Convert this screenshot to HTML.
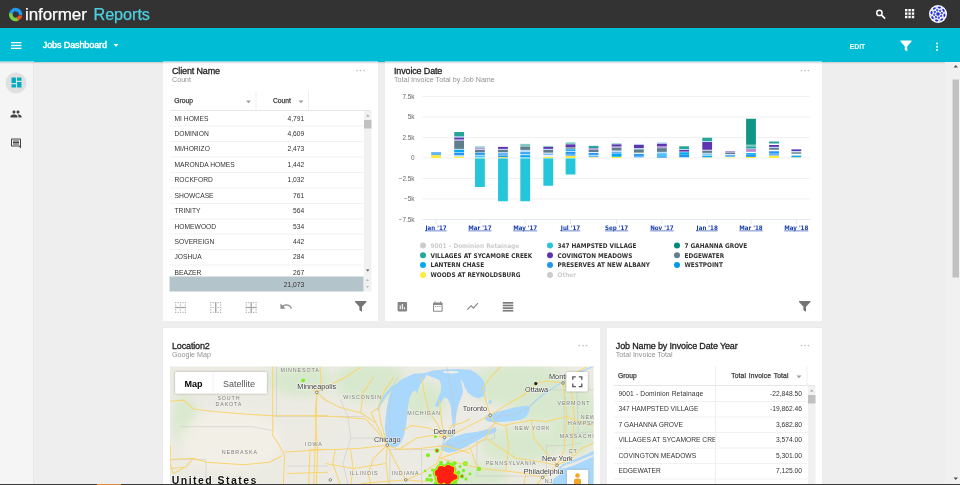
<!DOCTYPE html>
<html><head><meta charset="utf-8"><title>Informer Reports - Jobs Dashboard</title>
<style>
html,body{margin:0;padding:0;width:960px;height:485px;overflow:hidden;background:#eee}
body{font-family:"Liberation Sans",sans-serif;color:#212121}
#s{position:absolute;left:0;top:0;width:1920px;height:970px;transform:scale(.5);transform-origin:0 0;background:#eeeeee;overflow:hidden}
.abs{position:absolute}
#top{position:absolute;left:0;top:0;width:1920px;height:56px;background:#333333}
#bar{position:absolute;left:0;top:56px;width:1920px;height:67.5px;background:#00bcd4;}
#side{position:absolute;left:0;top:123px;width:67.7px;height:847px;background:#f5f5f5;border-right:1.2px solid #dadada;box-sizing:border-box}
.card{position:absolute;background:#fff;box-shadow:0 0 1.5px rgba(0,0,0,.08)}
.t{position:absolute;white-space:nowrap;line-height:1}
.ttl{font-size:18px;letter-spacing:-.3px;color:#212121;-webkit-text-stroke:.55px #212121}
.sub{font-size:14.3px;color:#929292}
.hd{font-size:13.4px;color:#3a3a3a;-webkit-text-stroke:.5px #3a3a3a}
.cell{font-size:13.4px;color:#333}
.hl{position:absolute;height:2px;background:#f1f1f1}
.vl{position:absolute;width:2px;background:#efefef}
svg{position:absolute;overflow:visible}
</style></head><body><div id="s">
<div id="top"></div><div id="bar"></div><div id="side"></div>
<svg style="left:0;top:0" width="60" height="56" viewBox="0 0 60 56">
<path d="M22.0 26.8 A9.6 9.6 0 0 1 40.9 30.1" fill="none" stroke="#1e9bf0" stroke-width="7"/>
<path d="M22.1 26.5 A9.6 9.6 0 0 0 35.8 37.8" fill="none" stroke="#73d14c" stroke-width="7"/>
<path d="M35.4 41.5 L34.2 35 L37.2 31.2 L44.3 30.8 Q43.5 38 35.4 41.5Z" fill="#f4511e"/>
</svg>
<div class="t " style="left:50.0px;top:10.6px;font-size:34px;color:#fff;-webkit-text-stroke:.5px #fff;letter-spacing:-.15px">informer</div>
<div class="t " style="left:187.0px;top:11.9px;font-size:32.5px;color:#4dd0e1;-webkit-text-stroke:.5px #4dd0e1;letter-spacing:-.15px">Reports</div>
<svg style="left:1750.5px;top:17.5px" width="22" height="22" viewBox="0 0 24 24"><circle cx="8.5" cy="8.5" r="5.800" fill="none" stroke="#fff" stroke-width="3.200"/><path d="M12.800 12.800 L21 21" stroke="#fff" stroke-width="3.600" stroke-linecap="butt"/></svg>
<svg style="left:1809.5px;top:18px" width="19" height="19" viewBox="0 0 19 19"><rect x="0.0" y="0.0" width="4.8" height="4.8" fill="#fff"/><rect x="0.0" y="6.8" width="4.8" height="4.8" fill="#fff"/><rect x="0.0" y="13.6" width="4.8" height="4.8" fill="#fff"/><rect x="6.8" y="0.0" width="4.8" height="4.8" fill="#fff"/><rect x="6.8" y="6.8" width="4.8" height="4.8" fill="#fff"/><rect x="6.8" y="13.6" width="4.8" height="4.8" fill="#fff"/><rect x="13.6" y="0.0" width="4.8" height="4.8" fill="#fff"/><rect x="13.6" y="6.8" width="4.8" height="4.8" fill="#fff"/><rect x="13.6" y="13.6" width="4.8" height="4.8" fill="#fff"/></svg>
<svg style="left:1858px;top:10px" width="36" height="36" viewBox="0 0 36 36"><circle cx="18" cy="18" r="18" fill="#fff"/><ellipse cx="30.9" cy="20.6" rx="2.1" ry="3.4" transform="rotate(11 30.9 20.6)" fill="#2430d6"/><ellipse cx="25.3" cy="29.0" rx="2.1" ry="3.4" transform="rotate(56 25.3 29.0)" fill="#2430d6"/><ellipse cx="15.4" cy="30.9" rx="2.1" ry="3.4" transform="rotate(101 15.4 30.9)" fill="#2430d6"/><ellipse cx="7.0" cy="25.3" rx="2.1" ry="3.4" transform="rotate(146 7.0 25.3)" fill="#2430d6"/><ellipse cx="5.1" cy="15.4" rx="2.1" ry="3.4" transform="rotate(191 5.1 15.4)" fill="#2430d6"/><ellipse cx="10.7" cy="7.0" rx="2.1" ry="3.4" transform="rotate(236 10.7 7.0)" fill="#2430d6"/><ellipse cx="20.6" cy="5.1" rx="2.1" ry="3.4" transform="rotate(281 20.6 5.1)" fill="#2430d6"/><ellipse cx="29.0" cy="10.7" rx="2.1" ry="3.4" transform="rotate(326 29.0 10.7)" fill="#2430d6"/><circle cx="24.3" cy="22.2" r="2.3" fill="#2430d6"/><path d="M18 18 L31.3 26.9" stroke="#9aa6f0" stroke-width="1"/><circle cx="19.5" cy="25.5" r="2.3" fill="#2430d6"/><path d="M18 18 L21.1 33.7" stroke="#9aa6f0" stroke-width="1"/><circle cx="13.8" cy="24.3" r="2.3" fill="#2430d6"/><path d="M18 18 L9.1 31.3" stroke="#9aa6f0" stroke-width="1"/><circle cx="10.5" cy="19.5" r="2.3" fill="#2430d6"/><path d="M18 18 L2.3 21.1" stroke="#9aa6f0" stroke-width="1"/><circle cx="11.7" cy="13.8" r="2.3" fill="#2430d6"/><path d="M18 18 L4.7 9.1" stroke="#9aa6f0" stroke-width="1"/><circle cx="16.5" cy="10.5" r="2.3" fill="#2430d6"/><path d="M18 18 L14.9 2.3" stroke="#9aa6f0" stroke-width="1"/><circle cx="22.2" cy="11.7" r="2.3" fill="#2430d6"/><path d="M18 18 L26.9 4.7" stroke="#9aa6f0" stroke-width="1"/><circle cx="25.5" cy="16.5" r="2.3" fill="#2430d6"/><path d="M18 18 L33.7 14.9" stroke="#9aa6f0" stroke-width="1"/><circle cx="18" cy="18" r="3.6" fill="#2a35d8"/></svg>
<svg style="left:21.5px;top:83.5px" width="21" height="14" viewBox="0 0 21 14"><rect y="0" width="21" height="2.6" fill="#fff"/><rect y="5.7" width="21" height="2.6" fill="#fff"/><rect y="11.4" width="21" height="2.6" fill="#fff"/></svg>
<div class="t " style="left:85.5px;top:81.2px;font-size:18.2px;color:#fff;-webkit-text-stroke:.8px #fff;letter-spacing:-.3px">Jobs Dashboard</div>
<svg style="left:226.5px;top:88px" width="10" height="6" viewBox="0 0 10 6"><path d="M0 0 L10 0 L5 5.5 Z" fill="#fff"/></svg>
<div class="t " style="left:1699.5px;top:85.6px;font-size:13.5px;color:#fff;font-weight:bold">EDIT</div>
<svg style="left:1801px;top:80.5px" width="22" height="22" viewBox="0 0 22 22"><path d="M0 0 H22 V2 L13.5 11.5 V22 L8.5 18.5 V11.5 L0 2 Z" fill="#fff"/></svg>
<svg style="left:1871px;top:85px" width="6" height="17" viewBox="0 0 6 17"><circle cx="3" cy="2" r="2" fill="#fff"/><circle cx="3" cy="8.5" r="2" fill="#fff"/><circle cx="3" cy="15" r="2" fill="#fff"/></svg>
<div class="abs" style="left:11px;top:144.5px;width:42px;height:42px;border-radius:50%;background:#e0e0e0"></div>
<svg style="left:22.5px;top:155px" width="20" height="20" viewBox="0 0 18 18"><path d="M0 10h8V0H0v10zm0 8h8v-6H0v6zm10 0h8V8h-8v10zm0-18v6h8V0h-8z" fill="#00acc1"/></svg>
<svg style="left:20px;top:216px" width="24" height="24" viewBox="0 0 24 24"><path d="M16 11c1.66 0 2.99-1.34 2.99-3S17.66 5 16 5c-1.66 0-3 1.34-3 3s1.34 3 3 3zm-8 0c1.66 0 2.99-1.34 2.99-3S9.660 5 8 5C6.340 5 5 6.340 5 8s1.340 3 3 3zm0 2c-2.330 0-7 1.170-7 3.500V19h14v-2.500c0-2.330-4.670-3.500-7-3.500zm8 0c-.29 0-.62.020-.970.050 1.160.84 1.970 1.970 1.970 3.450V19h6v-2.500c0-2.330-4.670-3.500-7-3.500z" fill="#424242"/></svg>
<svg style="left:20px;top:275px" width="24" height="24" viewBox="0 0 24 24"><path d="M21.990 4c0-1.100-.890-2-1.990-2H4c-1.100 0-2 .9-2 2v12c0 1.100.9 2 2 2h14l4 4-.010-18zM20 4v13.170L18.830 16H4V4h16zM6 12h12v2H6zm0-3h12v2H6zm0-3h12v2H6z" fill="#424242"/></svg>
<div class="card" id="c1" style="left:326px;top:123px;width:430px;height:518.5px"></div>
<div class="card" id="c2" style="left:770px;top:123px;width:874px;height:518.5px"></div>
<div class="card" id="c3" style="left:326px;top:656px;width:874px;height:330px"></div>
<div class="card" id="c4" style="left:1214px;top:656px;width:430px;height:330px"></div>
<div class="t ttl" style="left:344.0px;top:131.8px;">Client Name</div>
<div class="t sub" style="left:344.0px;top:151.4px;">Count</div>
<svg style="left:712px;top:138.5px" width="18" height="4" viewBox="0 0 18 4"><circle cx="2" cy="2" r="1.7" fill="#bdbdbd"/><circle cx="9" cy="2" r="1.7" fill="#bdbdbd"/><circle cx="16" cy="2" r="1.7" fill="#bdbdbd"/></svg>
<div class="t hd" style="left:348.5px;top:194.2px;">Group</div>
<svg style="left:491.5px;top:200.5px" width="10" height="6" viewBox="0 0 10 6"><path d="M0 0 H10 L5 5.5 Z" fill="#9e9e9e"/></svg>
<div class="t hd" style="right:1338.5px;top:194.2px;">Count</div>
<svg style="left:596.5px;top:200.5px" width="10" height="6" viewBox="0 0 10 6"><path d="M0 0 H10 L5 5.5 Z" fill="#9e9e9e"/></svg>
<div class="vl" style="left:510.5px;top:182px;height:38px"></div>
<div class="vl" style="left:616.3px;top:182px;height:38px"></div>
<div class="hl" style="left:339px;top:220px;width:403px;background:#e6e6e6"></div>
<div class="t cell" style="left:349.0px;top:229.7px;">MI HOMES</div>
<div class="t cell" style="right:1311.5px;top:229.7px;">4,791</div>
<div class="hl" style="left:339px;top:251.4px;width:388px"></div>
<div class="t cell" style="left:349.0px;top:260.5px;">DOMINION</div>
<div class="t cell" style="right:1311.5px;top:260.5px;">4,609</div>
<div class="hl" style="left:339px;top:282.3px;width:388px"></div>
<div class="t cell" style="left:349.0px;top:291.4px;">MI/HORIZO</div>
<div class="t cell" style="right:1311.5px;top:291.4px;">2,473</div>
<div class="hl" style="left:339px;top:313.1px;width:388px"></div>
<div class="t cell" style="left:349.0px;top:322.2px;">MARONDA HOMES</div>
<div class="t cell" style="right:1311.5px;top:322.2px;">1,442</div>
<div class="hl" style="left:339px;top:344.0px;width:388px"></div>
<div class="t cell" style="left:349.0px;top:353.1px;">ROCKFORD</div>
<div class="t cell" style="right:1311.5px;top:353.1px;">1,032</div>
<div class="hl" style="left:339px;top:374.8px;width:388px"></div>
<div class="t cell" style="left:349.0px;top:384.0px;">SHOWCASE</div>
<div class="t cell" style="right:1311.5px;top:384.0px;">761</div>
<div class="hl" style="left:339px;top:405.7px;width:388px"></div>
<div class="t cell" style="left:349.0px;top:414.8px;">TRINITY</div>
<div class="t cell" style="right:1311.5px;top:414.8px;">564</div>
<div class="hl" style="left:339px;top:436.6px;width:388px"></div>
<div class="t cell" style="left:349.0px;top:445.7px;">HOMEWOOD</div>
<div class="t cell" style="right:1311.5px;top:445.7px;">534</div>
<div class="hl" style="left:339px;top:467.4px;width:388px"></div>
<div class="t cell" style="left:349.0px;top:476.5px;">SOVEREIGN</div>
<div class="t cell" style="right:1311.5px;top:476.5px;">442</div>
<div class="hl" style="left:339px;top:498.3px;width:388px"></div>
<div class="t cell" style="left:349.0px;top:507.4px;">JOSHUA</div>
<div class="t cell" style="right:1311.5px;top:507.4px;">284</div>
<div class="hl" style="left:339px;top:529.1px;width:388px"></div>
<div class="t cell" style="left:349.0px;top:538.3px;">BEAZER</div>
<div class="t cell" style="right:1311.5px;top:538.3px;">267</div>
<div class="abs" style="left:339px;top:552.5px;width:388px;height:30px;background:#b4c4cb"></div>
<div class="t cell" style="right:1311.5px;top:562.7px;">21,073</div>
<div class="abs" style="left:727.5px;top:222px;width:15px;height:330px;background:#f1f1f1"></div>
<div class="abs" style="left:727.5px;top:239.5px;width:15px;height:17.5px;background:#c1c1c1"></div>
<svg style="left:731.5px;top:229px" width="7" height="4" viewBox="0 0 7 4"><path d="M0 4 H7 L3.5 0 Z" fill="#a3a3a3"/></svg>
<svg style="left:731.5px;top:539px" width="7" height="4" viewBox="0 0 7 4"><path d="M0 0 H7 L3.5 4 Z" fill="#505050"/></svg>
<div class="abs" style="left:727.5px;top:552.5px;width:15px;height:30px;background:#f1f1f1"></div>
<svg style="left:732px;top:558px" width="6" height="4" viewBox="0 0 7 4"><path d="M0 4 H7 L3.5 0 Z" fill="#a3a3a3"/></svg>
<svg style="left:732px;top:572px" width="6" height="4" viewBox="0 0 7 4"><path d="M0 0 H7 L3.5 4 Z" fill="#a3a3a3"/></svg>
<div class="t ttl" style="left:788.0px;top:131.8px;">Invoice Date</div>
<div class="t sub" style="left:788.0px;top:151.4px;">Total Invoice Total by Job Name</div>
<svg style="left:1601px;top:138.5px" width="18" height="4" viewBox="0 0 18 4"><circle cx="2" cy="2" r="1.7" fill="#bdbdbd"/><circle cx="9" cy="2" r="1.7" fill="#bdbdbd"/><circle cx="16" cy="2" r="1.7" fill="#bdbdbd"/></svg>
<svg style="left:0;top:0" width="1920" height="970" viewBox="0 0 960 485"><style>.yl{font:6.400px "Liberation Sans",sans-serif;fill:#666}.xl{font:bold 6.2px "DejaVu Sans Condensed","DejaVu Sans",sans-serif;fill:#1a3fb0;text-decoration:underline}.lg{font:bold 6.4px "DejaVu Sans Condensed","DejaVu Sans",sans-serif}</style><path d="M422.5 96.5 H810" stroke="#e6e6e6" stroke-width=".6"/><text x="414.5" y="98.7" text-anchor="end" class="yl">7.5k</text><path d="M422.5 117.0 H810" stroke="#e6e6e6" stroke-width=".6"/><text x="414.5" y="119.2" text-anchor="end" class="yl">5k</text><path d="M422.5 137.5 H810" stroke="#e6e6e6" stroke-width=".6"/><text x="414.5" y="139.7" text-anchor="end" class="yl">2.5k</text><path d="M422.5 158.0 H810" stroke="#e6e6e6" stroke-width=".6"/><text x="414.5" y="160.2" text-anchor="end" class="yl">0</text><path d="M422.5 178.5 H810" stroke="#e6e6e6" stroke-width=".6"/><text x="414.5" y="180.7" text-anchor="end" class="yl">−2.5k</text><path d="M422.5 199.0 H810" stroke="#e6e6e6" stroke-width=".6"/><text x="414.5" y="201.2" text-anchor="end" class="yl">−5k</text><path d="M422.5 219.5 H810" stroke="#ccd6eb" stroke-width=".6"/><text x="414.5" y="221.7" text-anchor="end" class="yl">−7.5k</text><rect x="431.20" y="155.12" width="9.8" height="2.88" fill="#ffeb3b"/><rect x="431.20" y="152.12" width="9.8" height="3.00" fill="#64b5f6"/><rect x="454.22" y="156.50" width="9.8" height="1.50" fill="#ffeb3b"/><rect x="454.22" y="155.12" width="9.8" height="1.38" fill="#bbdefb"/><rect x="454.22" y="152.62" width="9.8" height="2.50" fill="#2196f3"/><rect x="454.22" y="149.62" width="9.8" height="2.50" fill="#03a9f4"/><rect x="454.22" y="148.88" width="9.8" height="0.75" fill="#bbdefb"/><rect x="454.22" y="140.50" width="9.8" height="8.38" fill="#607d8b"/><rect x="454.22" y="139.25" width="9.8" height="1.25" fill="#b39ddb"/><rect x="454.22" y="137.38" width="9.8" height="1.88" fill="#5e35b1"/><rect x="454.22" y="136.38" width="9.8" height="1.00" fill="#bbdefb"/><rect x="454.22" y="132.00" width="9.8" height="4.38" fill="#26a69a"/><rect x="475.02" y="157.38" width="9.8" height="0.62" fill="#e3f2fd"/><rect x="475.02" y="155.50" width="9.8" height="1.88" fill="#4fc3f7"/><rect x="475.02" y="153.00" width="9.8" height="1.88" fill="#2196f3"/><rect x="475.02" y="152.38" width="9.8" height="0.62" fill="#bbdefb"/><rect x="475.02" y="149.88" width="9.8" height="2.50" fill="#607d8b"/><rect x="475.02" y="149.25" width="9.8" height="0.62" fill="#bbdefb"/><rect x="475.02" y="147.38" width="9.8" height="1.88" fill="#b39ddb"/><rect x="475.02" y="146.38" width="9.8" height="1.00" fill="#80cbc4"/><rect x="475.02" y="158.4" width="9.8" height="28.60" fill="#26c6da"/><rect x="498.04" y="157.12" width="9.8" height="0.88" fill="#ffeb3b"/><rect x="498.04" y="155.50" width="9.8" height="1.62" fill="#2196f3"/><rect x="498.04" y="152.62" width="9.8" height="2.88" fill="#64b5f6"/><rect x="498.04" y="149.62" width="9.8" height="2.50" fill="#607d8b"/><rect x="498.04" y="148.88" width="9.8" height="0.75" fill="#bbdefb"/><rect x="498.04" y="146.88" width="9.8" height="2.00" fill="#5e35b1"/><rect x="498.04" y="158.4" width="9.8" height="42.85" fill="#26c6da"/><rect x="520.32" y="157.38" width="9.8" height="0.62" fill="#e3f2fd"/><rect x="520.32" y="155.12" width="9.8" height="2.25" fill="#03a9f4"/><rect x="520.32" y="153.88" width="9.8" height="1.25" fill="#bbdefb"/><rect x="520.32" y="152.12" width="9.8" height="1.75" fill="#2196f3"/><rect x="520.32" y="149.88" width="9.8" height="2.25" fill="#bbdefb"/><rect x="520.32" y="146.38" width="9.8" height="3.50" fill="#607d8b"/><rect x="520.32" y="143.88" width="9.8" height="2.50" fill="#80cbc4"/><rect x="520.32" y="158.4" width="9.8" height="42.85" fill="#26c6da"/><rect x="543.35" y="156.75" width="9.8" height="1.25" fill="#ffeb3b"/><rect x="543.35" y="154.88" width="9.8" height="1.88" fill="#e3f2fd"/><rect x="543.35" y="153.38" width="9.8" height="1.50" fill="#64b5f6"/><rect x="543.35" y="152.62" width="9.8" height="0.75" fill="#e3f2fd"/><rect x="543.35" y="149.88" width="9.8" height="2.75" fill="#607d8b"/><rect x="543.35" y="148.88" width="9.8" height="1.00" fill="#bbdefb"/><rect x="543.35" y="146.75" width="9.8" height="2.12" fill="#5e35b1"/><rect x="543.35" y="145.88" width="9.8" height="0.88" fill="#80cbc4"/><rect x="543.35" y="158.4" width="9.8" height="27.35" fill="#26c6da"/><rect x="565.63" y="155.88" width="9.8" height="2.12" fill="#ffeb3b"/><rect x="565.63" y="153.88" width="9.8" height="2.00" fill="#64b5f6"/><rect x="565.63" y="151.75" width="9.8" height="2.12" fill="#2196f3"/><rect x="565.63" y="150.88" width="9.8" height="0.88" fill="#bbdefb"/><rect x="565.63" y="149.25" width="9.8" height="1.62" fill="#03a9f4"/><rect x="565.63" y="147.12" width="9.8" height="2.12" fill="#90a4ae"/><rect x="565.63" y="144.25" width="9.8" height="2.88" fill="#5e35b1"/><rect x="565.63" y="142.38" width="9.8" height="1.88" fill="#80cbc4"/><rect x="565.63" y="158.4" width="9.8" height="16.10" fill="#26c6da"/><rect x="588.65" y="157.12" width="9.8" height="0.88" fill="#fff59d"/><rect x="588.65" y="155.50" width="9.8" height="1.62" fill="#64b5f6"/><rect x="588.65" y="153.00" width="9.8" height="1.88" fill="#2196f3"/><rect x="588.65" y="149.88" width="9.8" height="2.25" fill="#607d8b"/><rect x="588.65" y="148.00" width="9.8" height="1.88" fill="#b39ddb"/><rect x="588.65" y="145.88" width="9.8" height="2.12" fill="#26a69a"/><rect x="611.68" y="156.75" width="9.8" height="1.25" fill="#ffeb3b"/><rect x="611.68" y="153.88" width="9.8" height="2.88" fill="#03a9f4"/><rect x="611.68" y="151.75" width="9.8" height="2.12" fill="#64b5f6"/><rect x="611.68" y="150.50" width="9.8" height="1.25" fill="#bbdefb"/><rect x="611.68" y="147.62" width="9.8" height="2.88" fill="#607d8b"/><rect x="611.68" y="146.38" width="9.8" height="1.25" fill="#b39ddb"/><rect x="611.68" y="144.25" width="9.8" height="2.12" fill="#5e35b1"/><rect x="611.68" y="143.38" width="9.8" height="0.88" fill="#80cbc4"/><rect x="633.96" y="157.38" width="9.8" height="0.62" fill="#e3f2fd"/><rect x="633.96" y="155.88" width="9.8" height="1.50" fill="#64b5f6"/><rect x="633.96" y="153.88" width="9.8" height="2.00" fill="#2196f3"/><rect x="633.96" y="149.25" width="9.8" height="3.38" fill="#607d8b"/><rect x="633.96" y="148.00" width="9.8" height="1.25" fill="#bbdefb"/><rect x="633.96" y="144.62" width="9.8" height="3.38" fill="#5e35b1"/><rect x="633.96" y="143.88" width="9.8" height="0.75" fill="#bbdefb"/><rect x="656.98" y="156.00" width="9.8" height="2.00" fill="#64b5f6"/><rect x="656.98" y="153.12" width="9.8" height="2.88" fill="#4fc3f7"/><rect x="656.98" y="151.88" width="9.8" height="1.25" fill="#bbdefb"/><rect x="656.98" y="148.12" width="9.8" height="3.75" fill="#607d8b"/><rect x="656.98" y="146.25" width="9.8" height="1.88" fill="#b39ddb"/><rect x="656.98" y="143.50" width="9.8" height="2.75" fill="#5e35b1"/><rect x="656.98" y="142.25" width="9.8" height="1.25" fill="#bbdefb"/><rect x="679.26" y="154.75" width="9.8" height="2.50" fill="#2196f3"/><rect x="679.26" y="152.25" width="9.8" height="2.50" fill="#03a9f4"/><rect x="679.26" y="149.75" width="9.8" height="1.88" fill="#5e35b1"/><rect x="679.26" y="149.00" width="9.8" height="0.75" fill="#bbdefb"/><rect x="679.26" y="146.25" width="9.8" height="2.75" fill="#26a69a"/><rect x="702.29" y="157.25" width="9.8" height="0.75" fill="#fff59d"/><rect x="702.29" y="155.62" width="9.8" height="1.62" fill="#03a9f4"/><rect x="702.29" y="153.50" width="9.8" height="1.25" fill="#64b5f6"/><rect x="702.29" y="150.62" width="9.8" height="2.25" fill="#607d8b"/><rect x="702.29" y="141.88" width="9.8" height="7.88" fill="#5e35b1"/><rect x="702.29" y="141.00" width="9.8" height="0.88" fill="#bbdefb"/><rect x="702.29" y="137.75" width="9.8" height="3.25" fill="#26a69a"/><rect x="725.31" y="156.88" width="9.8" height="1.12" fill="#fff59d"/><rect x="725.31" y="154.75" width="9.8" height="2.12" fill="#64b5f6"/><rect x="725.31" y="152.50" width="9.8" height="1.50" fill="#607d8b"/><rect x="725.31" y="151.00" width="9.8" height="1.50" fill="#b39ddb"/><rect x="746.10" y="156.88" width="9.8" height="1.12" fill="#ffeb3b"/><rect x="746.10" y="154.75" width="9.8" height="2.12" fill="#2196f3"/><rect x="746.10" y="153.12" width="9.8" height="1.62" fill="#03a9f4"/><rect x="746.10" y="149.00" width="9.8" height="2.88" fill="#bf8ad2"/><rect x="746.10" y="148.12" width="9.8" height="0.88" fill="#80cbc4"/><rect x="746.10" y="146.25" width="9.8" height="1.88" fill="#26a69a"/><rect x="746.10" y="144.75" width="9.8" height="1.50" fill="#80cbc4"/><rect x="746.10" y="118.75" width="9.8" height="26.00" fill="#109685"/><rect x="769.13" y="155.62" width="9.8" height="2.38" fill="#ffeb3b"/><rect x="769.13" y="153.50" width="9.8" height="2.12" fill="#64b5f6"/><rect x="769.13" y="151.25" width="9.8" height="2.25" fill="#2196f3"/><rect x="769.13" y="147.75" width="9.8" height="2.00" fill="#607d8b"/><rect x="769.13" y="146.88" width="9.8" height="0.88" fill="#bbdefb"/><rect x="769.13" y="145.00" width="9.8" height="1.88" fill="#5e35b1"/><rect x="769.13" y="141.50" width="9.8" height="2.00" fill="#26a69a"/><rect x="791.41" y="157.25" width="9.8" height="0.75" fill="#fff59d"/><rect x="791.41" y="155.62" width="9.8" height="1.62" fill="#03a9f4"/><rect x="791.41" y="151.88" width="9.8" height="2.12" fill="#90a4ae"/><rect x="791.41" y="151.00" width="9.8" height="0.88" fill="#bbdefb"/><rect x="791.41" y="149.38" width="9.8" height="1.62" fill="#5e35b1"/><path d="M436.1 219.5 V224" stroke="#ccd6eb" stroke-width=".6"/><text x="436.1" y="229.6" text-anchor="middle" class="xl">Jan '17</text><path d="M479.9 219.5 V224" stroke="#ccd6eb" stroke-width=".6"/><text x="479.9" y="229.6" text-anchor="middle" class="xl">Mar '17</text><path d="M525.2 219.5 V224" stroke="#ccd6eb" stroke-width=".6"/><text x="525.2" y="229.6" text-anchor="middle" class="xl">May '17</text><path d="M570.5 219.5 V224" stroke="#ccd6eb" stroke-width=".6"/><text x="570.5" y="229.6" text-anchor="middle" class="xl">Jul '17</text><path d="M616.6 219.5 V224" stroke="#ccd6eb" stroke-width=".6"/><text x="616.6" y="229.6" text-anchor="middle" class="xl">Sep '17</text><path d="M661.9 219.5 V224" stroke="#ccd6eb" stroke-width=".6"/><text x="661.9" y="229.6" text-anchor="middle" class="xl">Nov '17</text><path d="M707.2 219.5 V224" stroke="#ccd6eb" stroke-width=".6"/><text x="707.2" y="229.6" text-anchor="middle" class="xl">Jan '18</text><path d="M751.0 219.5 V224" stroke="#ccd6eb" stroke-width=".6"/><text x="751.0" y="229.6" text-anchor="middle" class="xl">Mar '18</text><path d="M796.3 219.5 V224" stroke="#ccd6eb" stroke-width=".6"/><text x="796.3" y="229.6" text-anchor="middle" class="xl">May '18</text><circle cx="423" cy="245.40" r="3" fill="#cccccc"/><text x="430.5" y="247.70" class="lg" fill="#cccccc">9001 – Dominion Retainage</text><circle cx="423" cy="255.25" r="3" fill="#26a69a"/><text x="430.5" y="257.55" class="lg" fill="#333333">VILLAGES AT SYCAMORE CREEK</text><circle cx="423" cy="265.10" r="3" fill="#03a9f4"/><text x="430.5" y="267.40" class="lg" fill="#333333">LANTERN CHASE</text><circle cx="423" cy="274.95" r="3" fill="#ffeb3b"/><text x="430.5" y="277.25" class="lg" fill="#333333">WOODS AT REYNOLDSBURG</text><circle cx="550" cy="245.40" r="3" fill="#26c6da"/><text x="557.5" y="247.70" class="lg" fill="#333333">347 HAMPSTED VILLAGE</text><circle cx="550" cy="255.25" r="3" fill="#5e35b1"/><text x="557.5" y="257.55" class="lg" fill="#333333">COVINGTON MEADOWS</text><circle cx="550" cy="265.10" r="3" fill="#2196f3"/><text x="557.5" y="267.40" class="lg" fill="#333333">PRESERVES AT NEW ALBANY</text><circle cx="550" cy="274.95" r="3" fill="#cccccc"/><text x="557.5" y="277.25" class="lg" fill="#cccccc">Other</text><circle cx="677" cy="245.40" r="3" fill="#00897b"/><text x="684.5" y="247.70" class="lg" fill="#333333">7 GAHANNA GROVE</text><circle cx="677" cy="255.25" r="3" fill="#607d8b"/><text x="684.5" y="257.55" class="lg" fill="#333333">EDGEWATER</text><circle cx="677" cy="265.10" r="3" fill="#039be5"/><text x="684.5" y="267.40" class="lg" fill="#333333">WESTPOINT</text></svg>
<svg style="left:0;top:0" width="1920" height="970" viewBox="0 0 960 485"><rect x="175.00" y="302.00" width="1.22" height="1.22" fill="#b4b4b4"/><rect x="175.00" y="304.44" width="1.22" height="1.22" fill="#b4b4b4"/><rect x="175.00" y="306.89" width="1.22" height="1.22" fill="#b4b4b4"/><rect x="175.00" y="309.33" width="1.22" height="1.22" fill="#b4b4b4"/><rect x="175.00" y="311.78" width="1.22" height="1.22" fill="#b4b4b4"/><rect x="177.44" y="302.00" width="1.22" height="1.22" fill="#b4b4b4"/><rect x="177.44" y="306.89" width="1.22" height="1.22" fill="#b4b4b4"/><rect x="177.44" y="311.78" width="1.22" height="1.22" fill="#b4b4b4"/><rect x="179.89" y="302.00" width="1.22" height="1.22" fill="#b4b4b4"/><rect x="179.89" y="304.44" width="1.22" height="1.22" fill="#b4b4b4"/><rect x="179.89" y="306.89" width="1.22" height="1.22" fill="#b4b4b4"/><rect x="179.89" y="309.33" width="1.22" height="1.22" fill="#b4b4b4"/><rect x="179.89" y="311.78" width="1.22" height="1.22" fill="#b4b4b4"/><rect x="182.33" y="302.00" width="1.22" height="1.22" fill="#b4b4b4"/><rect x="182.33" y="306.89" width="1.22" height="1.22" fill="#b4b4b4"/><rect x="182.33" y="311.78" width="1.22" height="1.22" fill="#b4b4b4"/><rect x="184.78" y="302.00" width="1.22" height="1.22" fill="#b4b4b4"/><rect x="184.78" y="304.44" width="1.22" height="1.22" fill="#b4b4b4"/><rect x="184.78" y="306.89" width="1.22" height="1.22" fill="#b4b4b4"/><rect x="184.78" y="309.33" width="1.22" height="1.22" fill="#b4b4b4"/><rect x="184.78" y="311.78" width="1.22" height="1.22" fill="#b4b4b4"/><rect x="175.00" y="306.89" width="11" height="1.22" fill="#a6a6a6"/><rect x="210.20" y="302.00" width="1.22" height="1.22" fill="#b4b4b4"/><rect x="210.20" y="304.44" width="1.22" height="1.22" fill="#b4b4b4"/><rect x="210.20" y="306.89" width="1.22" height="1.22" fill="#b4b4b4"/><rect x="210.20" y="309.33" width="1.22" height="1.22" fill="#b4b4b4"/><rect x="210.20" y="311.78" width="1.22" height="1.22" fill="#b4b4b4"/><rect x="212.64" y="302.00" width="1.22" height="1.22" fill="#b4b4b4"/><rect x="212.64" y="306.89" width="1.22" height="1.22" fill="#b4b4b4"/><rect x="212.64" y="311.78" width="1.22" height="1.22" fill="#b4b4b4"/><rect x="215.09" y="302.00" width="1.22" height="1.22" fill="#b4b4b4"/><rect x="215.09" y="304.44" width="1.22" height="1.22" fill="#b4b4b4"/><rect x="215.09" y="306.89" width="1.22" height="1.22" fill="#b4b4b4"/><rect x="215.09" y="309.33" width="1.22" height="1.22" fill="#b4b4b4"/><rect x="215.09" y="311.78" width="1.22" height="1.22" fill="#b4b4b4"/><rect x="217.53" y="302.00" width="1.22" height="1.22" fill="#b4b4b4"/><rect x="217.53" y="306.89" width="1.22" height="1.22" fill="#b4b4b4"/><rect x="217.53" y="311.78" width="1.22" height="1.22" fill="#b4b4b4"/><rect x="219.98" y="302.00" width="1.22" height="1.22" fill="#b4b4b4"/><rect x="219.98" y="304.44" width="1.22" height="1.22" fill="#b4b4b4"/><rect x="219.98" y="306.89" width="1.22" height="1.22" fill="#b4b4b4"/><rect x="219.98" y="309.33" width="1.22" height="1.22" fill="#b4b4b4"/><rect x="219.98" y="311.78" width="1.22" height="1.22" fill="#b4b4b4"/><rect x="215.09" y="302.00" width="1.22" height="11" fill="#a6a6a6"/><rect x="245.70" y="302.00" width="1.22" height="1.22" fill="#b4b4b4"/><rect x="245.70" y="304.44" width="1.22" height="1.22" fill="#b4b4b4"/><rect x="245.70" y="306.89" width="1.22" height="1.22" fill="#b4b4b4"/><rect x="245.70" y="309.33" width="1.22" height="1.22" fill="#b4b4b4"/><rect x="245.70" y="311.78" width="1.22" height="1.22" fill="#b4b4b4"/><rect x="248.14" y="302.00" width="1.22" height="1.22" fill="#b4b4b4"/><rect x="248.14" y="306.89" width="1.22" height="1.22" fill="#b4b4b4"/><rect x="248.14" y="311.78" width="1.22" height="1.22" fill="#b4b4b4"/><rect x="250.59" y="302.00" width="1.22" height="1.22" fill="#b4b4b4"/><rect x="250.59" y="304.44" width="1.22" height="1.22" fill="#b4b4b4"/><rect x="250.59" y="306.89" width="1.22" height="1.22" fill="#b4b4b4"/><rect x="250.59" y="309.33" width="1.22" height="1.22" fill="#b4b4b4"/><rect x="250.59" y="311.78" width="1.22" height="1.22" fill="#b4b4b4"/><rect x="253.03" y="302.00" width="1.22" height="1.22" fill="#b4b4b4"/><rect x="253.03" y="306.89" width="1.22" height="1.22" fill="#b4b4b4"/><rect x="253.03" y="311.78" width="1.22" height="1.22" fill="#b4b4b4"/><rect x="255.48" y="302.00" width="1.22" height="1.22" fill="#b4b4b4"/><rect x="255.48" y="304.44" width="1.22" height="1.22" fill="#b4b4b4"/><rect x="255.48" y="306.89" width="1.22" height="1.22" fill="#b4b4b4"/><rect x="255.48" y="309.33" width="1.22" height="1.22" fill="#b4b4b4"/><rect x="255.48" y="311.78" width="1.22" height="1.22" fill="#b4b4b4"/><rect x="245.70" y="306.89" width="11" height="1.22" fill="#a6a6a6"/><rect x="250.59" y="302.00" width="1.22" height="11" fill="#a6a6a6"/><g transform="translate(279.3,299.6) scale(.567)"><path d="M12.5 8c-2.650 0-5.050.990-6.900 2.600L2 7v9h9l-3.620-3.620c1.390-1.160 3.160-1.880 5.120-1.880 3.540 0 6.550 2.310 7.600 5.500l2.370-.780C21.080 11.030 17.150 8 12.500 8z" fill="#8c8c8c"/></g><path d="M355 301.1 h11.4 v1 l-4.4 4.700 v5 l-2.600 -1.600 v-3.400 l-4.400 -4.700 z" fill="#757575"/><path d="M799 301.1 h11.4 v1 l-4.4 4.700 v5 l-2.600 -1.600 v-3.400 l-4.400 -4.700 z" fill="#757575"/><g transform="translate(396,300.3) scale(.528)"><path d="M19 3H5c-1.100 0-2 .9-2 2v14c0 1.100.9 2 2 2h14c1.100 0 2-.9 2-2V5c0-1.100-.9-2-2-2zM9 17H7v-7h2v7zm4 0h-2V7h2v10zm4 0h-2v-4h2v4z" fill="#858585"/></g><g transform="translate(431.4,300.4) scale(.535,.515)"><path d="M9 11H7v2h2v-2zm4 0h-2v2h2v-2zm4 0h-2v2h2v-2zm2-7h-1V2h-2v2H8V2H6v2H5c-1.110 0-1.990.9-1.990 2L3 20c0 1.100.890 2 2 2h14c1.100 0 2-.9 2-2V6c0-1.100-.9-2-2-2zm0 16H5V9h14v11z" fill="#8a8a8a"/></g><g transform="translate(465.7,299.500) scale(.57)"><path d="M3.500 18.490l6-6.010 4 4L22 6.920l-1.410-1.410-7.090 7.970-4-4L2 16.990z" fill="#858585"/></g><rect x="502.700" y="302.00" width="10.600" height="1.700" fill="#7c7c7c"/><rect x="502.700" y="304.63" width="10.600" height="1.700" fill="#7c7c7c"/><rect x="502.700" y="307.26" width="10.600" height="1.700" fill="#7c7c7c"/><rect x="502.700" y="309.89" width="10.600" height="1.700" fill="#7c7c7c"/></svg>
<div class="t ttl" style="left:344.0px;top:681.8px;">Location2</div>
<div class="t sub" style="left:344.0px;top:701.4px;">Google Map</div>
<svg style="left:1157px;top:689px" width="18" height="4" viewBox="0 0 18 4"><circle cx="2" cy="2" r="1.7" fill="#bdbdbd"/><circle cx="9" cy="2" r="1.7" fill="#bdbdbd"/><circle cx="16" cy="2" r="1.7" fill="#bdbdbd"/></svg>
<svg style="left:0;top:0" width="1920" height="970" viewBox="0 0 960 485"><style>.ms{font:5.300px "Liberation Sans",sans-serif;fill:#7c7c7c;letter-spacing:.9px;paint-order:stroke;stroke:#f4f3ec;stroke-width:.8px;stroke-opacity:.7}.mc{font:7.300px "Liberation Sans",sans-serif;fill:#3a3a3a;paint-order:stroke;stroke:#fff;stroke-width:1px;stroke-opacity:.8}.mu{font:bold 10.500px "Liberation Sans",sans-serif;fill:#111;letter-spacing:1.45px;paint-order:stroke;stroke:#fff;stroke-width:1px}.mb{font:9px "Liberation Sans",sans-serif}</style><defs><clipPath id="mc"><rect x="170" y="366.500" width="423.600" height="119"/></clipPath><filter id="bl"><feGaussianBlur stdDeviation="1.2"/></filter><filter id="b2"><feGaussianBlur stdDeviation="5"/></filter></defs><g clip-path="url(#mc)"><rect x="170" y="366" width="424" height="120" fill="#ecebe3"/><g filter="url(#b2)" fill="#d6e8cb" opacity=".9"><ellipse cx="300" cy="380" rx="32" ry="16"/><ellipse cx="370" cy="382" rx="36" ry="20"/><ellipse cx="545" cy="410" rx="30" ry="14"/><ellipse cx="520" cy="385" rx="50" ry="22"/><ellipse cx="575" cy="420" rx="25" ry="35"/><ellipse cx="185" cy="420" rx="12" ry="25"/><ellipse cx="520" cy="445" rx="40" ry="18"/><ellipse cx="425" cy="400" rx="22" ry="18"/><ellipse cx="470" cy="475" rx="40" ry="12"/></g><g filter="url(#b2)" fill="#f4f1e8" opacity=".8"><ellipse cx="230" cy="440" rx="50" ry="30"/></g><polygon fill="#aad8fc" points="425.7,372.8 420.1,373.5 414.5,373.5 407.1,376.8 400.6,380.0 395.0,385.2 391.3,391.7 388.6,399.1 386.7,408.4 385.6,417.7 384.8,426.9 385.6,436.2 387.6,443.6 391.9,447.7 397.5,446.6 401.5,441.8 404.3,434.4 406.2,425.1 407.1,415.8 408.0,406.5 409.3,399.1 411.9,392.8 415.3,390.2 417.1,393.9 418.6,388.3 421.0,383.5 423.8,379.8 426.0,376.1"/><polygon fill="#aad8fc" points="395.6,383.9 391.9,385.7 386.7,391.7 382.2,397.3 378.3,405.6 376.7,410.6 378.5,410.6 381.1,404.3 385.6,397.6 390.4,391.7 395.0,387.0"/><polygon fill="#aad8fc" points="424.9,373.1 433.1,370.5 444.2,369.4 457.2,369.1 470.2,369.8 475.8,372.8 480.4,376.8 483.5,380.6 485.4,386.1 485.4,391.7 483.5,396.3 478.0,398.2 472.4,396.3 467.8,392.6 465.0,388.0 463.1,382.4 460.4,378.7 462.2,386.1 463.1,391.7 461.3,397.3 459.4,401.9 457.6,408.4 455.7,417.7 453.9,426.9 453.5,430.3 452.6,424.2 451.6,415.8 450.7,406.5 447.9,399.1 444.2,397.3 441.4,401.9 437.7,407.5 434.9,405.6 437.7,399.1 440.5,392.6 441.4,386.1 439.6,380.6 434.0,377.8 427.5,375.4"/><polygon fill="#eef0e4" points="442.4,371.6 449.8,370.9 457.2,371.3 459.1,372.8 451.6,373.5 444.2,373.1"/><ellipse cx="450.800" cy="434.200" rx="3.600" ry="2.800" fill="#aad8fc"/><path d="M447.500 436 L444.800 438.500 L442.500 444.500" stroke="#aad8fc" stroke-width="1.300" fill="none"/><polygon fill="#aad8fc" points="442.300,445.200 447,440.500 452.100,437.800 464.400,433.600 476.800,431.800 489.200,428.900 496,427.500 496.500,430.500 495,432.400 484.200,436.700 474.300,442.300 464.400,447.200 455.800,451.600 448.400,452.800 441.600,450.300 440.800,447"/><polygon fill="#aad8fc" points="484.5,417.7 487.3,414.9 491.0,413.9 497.5,411.7 504.9,409.9 514.2,407.5 521.6,406.2 527.2,405.6 530.0,407.5 529.1,412.1 526.3,416.7 521.6,419.5 514.2,421.0 504.9,421.7 495.7,422.3 488.6,421.7 485.5,419.9"/><ellipse cx="490.1" cy="401.9" rx="1.600" ry="2" fill="#aad8fc"/><path d="M529.500 406.500 L537 400 L546 392.500 L556 386 L566 380 L580 372 L594 366" stroke="#aad8fc" stroke-width="1.200" fill="none"/><path d="M565.300 397 L565.800 406" stroke="#aad8fc" stroke-width="1.300" fill="none"/><polygon fill="#aad8fc" points="557.9,468.5 563.1,464.0 570.5,461.0 579.8,457.3 587.2,454.0 594.6,450.3 594.6,485.9 551.9,485.9 553.4,478.9 559.0,475.1 561.2,471.1"/><polygon fill="#ecebe3" points="561.2,467.7 565.3,465.1 574.2,462.2 583.5,458.5 593.7,454.4 593.7,456.2 585.3,460.3 576.1,464.4 567.2,467.7 562.3,468.8"/><g fill="none" stroke="#c4c4c4" stroke-width=".5"><polyline points="180.7,426.7 251.7,426.7 272.0,430.5"/><polyline points="206.0,459.6 206.0,485.0"/><polyline points="170.5,459.6 206.0,459.6"/><polyline points="274.5,416.5 328.0,416.5"/><polyline points="287.2,466.0 328.0,466.0"/><polyline points="276.5,366.6 276.5,416.5"/><polyline points="334.1,416.5 364.5,416.5"/><polyline points="340.4,400.0 348.0,416.5 350.6,438.1 343.0,463.4 348.0,485.0"/><polyline points="350.6,438.1 386.1,438.1"/><polyline points="389.9,449.5 389.9,485.0"/><polyline points="421.6,449.5 421.6,485.0"/><polyline points="389.9,449.5 441.8,449.5"/><polyline points="476.8,441.9 476.8,476.1 546.5,476.1"/><polyline points="476.8,441.9 494.5,438.1 494.5,426.7"/><polyline points="546.5,445.7 546.5,476.1"/><polyline points="564.2,389.9 564.2,445.7 546.5,445.7"/><polyline points="546.5,389.9 593.7,389.9"/><polyline points="576.9,389.9 578.2,433.0 564.2,434.3"/><polyline points="564.2,445.7 582.0,443.1"/><polyline points="578.2,433.0 593.7,431.7"/><polyline points="446.9,366.6 452.0,392.4 455.8,422.9 452.0,435.5 446.9,443.1 457.1,449.5 470.0,445.7"/><polyline points="437.5,445.7 455.2,444.4 478.0,435.5 494.5,424.1 497.0,416.5 516.1,414.0 528.7,407.6 546.5,389.9"/><polyline points="397.5,377.2 391.1,392.4 389.1,412.7 389.9,438.1"/></g><g fill="none" stroke="#f8d572" stroke-width="1.05" stroke-linejoin="round"><polyline points="170.5,401.3 183.2,400.0 193.4,408.9 213.6,411.4 244.1,414.0 272.0,415.8 328.0,415.8"/><polyline points="272.7,366.6 272.7,435.5 279.6,445.7 284.6,455.8 283.4,485.0"/><polyline points="284.6,452.0 328.0,449.5"/><polyline points="170.5,459.6 193.4,458.3 206.0,462.2 244.1,464.7 269.4,462.2 282.1,455.8"/><polyline points="170.5,445.7 170.0,463.4 173.1,473.6 183.2,468.5"/><polyline points="193.4,458.3 185.7,467.2 170.5,468.5"/><polyline points="316.8,392.4 316.3,415.2 315.1,449.5 313.8,485.0"/><polyline points="320.1,366.6 321.4,387.4 316.8,392.4"/><polyline points="287.2,473.6 328.0,472.3"/><polyline points="310.0,449.5 308.7,485.0"/><polyline points="316.8,392.4 325.2,400.0 340.4,407.6 360.7,412.7 375.9,422.9 383.5,438.1 387.3,445.2"/><polyline points="316.8,392.4 330.3,384.8 345.5,377.2 360.7,367.1"/><polyline points="316.8,392.4 310.0,387.4"/><polyline points="316.8,392.4 315.1,416.5 317.6,449.5 316.3,485.0"/><polyline points="310.0,415.8 335.4,416.5 365.8,419.0 378.5,433.0 387.3,445.2"/><polyline points="310.0,449.5 335.4,449.5 360.7,448.2 387.3,445.2"/><polyline points="387.3,445.2 381.0,422.9 378.5,407.6 383.5,392.4 393.7,377.2"/><polyline points="387.3,445.2 373.4,458.3 368.3,473.6 370.9,485.0"/><polyline points="387.3,445.2 386.1,463.4 388.6,485.0"/><polyline points="387.3,445.2 398.7,449.5 421.6,448.2 444.4,445.7 462.1,450.7 470.0,453.3"/><polyline points="387.3,445.2 396.2,463.4 405.8,479.9"/><polyline points="405.8,479.9 386.1,481.2 360.7,483.7"/><polyline points="405.8,479.9 421.6,473.6 436.8,463.4 444.4,445.7"/><polyline points="405.8,479.9 424.1,481.2 446.9,477.4"/><polyline points="350.6,449.5 353.1,468.5 350.6,485.0"/><polyline points="335.4,449.5 332.8,463.4 340.4,485.0"/><polyline points="325.2,463.4 353.1,468.5 386.1,463.4"/><polyline points="398.7,449.5 416.5,438.1 431.7,435.5 444.4,437.6"/><polyline points="444.4,437.6 436.8,422.9 429.2,412.7 424.1,392.4 421.6,377.2"/><polyline points="444.4,437.6 429.2,427.9 411.4,425.4 403.8,430.5"/><polyline points="444.4,437.6 441.8,422.9 439.3,400.0"/><polyline points="444.4,437.6 452.0,425.4 462.1,422.9 470.0,419.0"/><polyline points="375.9,422.9 370.9,412.7 378.5,407.6"/><polyline points="360.7,412.7 363.2,392.4 373.4,377.2"/><polyline points="443.8,438.1 455.2,433.0 470.4,425.4 490.2,415.2"/><polyline points="490.2,415.2 505.9,405.1 523.7,395.0 535.8,383.6 546.5,381.0 563.0,383.0"/><polyline points="490.2,415.2 485.6,400.0 483.1,387.4 490.7,377.2 500.9,366.6"/><polyline points="490.2,415.2 494.5,422.9 503.4,425.4 516.1,422.9 531.3,420.3 546.5,421.6 566.8,416.5"/><polyline points="494.5,422.9 485.6,438.1 470.4,448.2 455.2,453.3 440.0,458.3"/><polyline points="440.0,458.3 460.3,463.4 480.6,468.5 505.9,471.0 526.2,473.6 542.7,477.4"/><polyline points="470.4,448.2 475.5,463.4 480.6,468.5"/><polyline points="505.9,425.4 508.5,445.7 505.9,471.0"/><polyline points="531.3,420.3 533.8,438.1 546.5,453.3 557.1,465.2"/><polyline points="557.1,465.2 542.7,477.4 536.3,485.0"/><polyline points="557.1,465.2 564.2,450.7 566.8,416.5 563.0,383.0"/><polyline points="557.1,465.2 571.8,458.3 582.0,448.2 593.7,443.1"/><polyline points="516.1,458.3 536.3,460.9 557.1,465.2"/><polyline points="485.6,438.1 516.1,458.3"/><polyline points="566.8,416.5 582.0,422.9 593.7,425.4"/><polyline points="563.0,383.0 576.9,372.1 587.1,366.6"/><polyline points="563.0,383.0 571.8,392.4 574.4,416.5 571.8,458.3"/><polyline points="526.2,473.6 523.7,485.0"/></g><text x="300.0" y="372.4" text-anchor="middle" class="ms">MINNESOTA</text><text x="228.9" y="399.5" text-anchor="middle" class="ms">SOUTH</text><text x="228.9" y="405.8" text-anchor="middle" class="ms">DAKOTA</text><text x="239.8" y="453.8" text-anchor="middle" class="ms">NEBRASKA</text><text x="313.8" y="445.9" text-anchor="middle" class="ms">IOWA</text><text x="362.7" y="399.0" text-anchor="middle" class="ms">WISCONSIN</text><text x="424.1" y="414.7" text-anchor="middle" class="ms">MICHIGAN</text><text x="364.0" y="475.0" text-anchor="middle" class="ms">ILLINOIS</text><text x="405.6" y="475.0" text-anchor="middle" class="ms">INDIANA</text><text x="573.9" y="404.6" text-anchor="middle" class="ms">VERMONT</text><text x="580.7" y="418.5" text-anchor="start" class="ms">NEW</text><text x="568.0" y="424.9" text-anchor="start" class="ms">HAMPSHIRE</text><text x="532.5" y="430.4" text-anchor="middle" class="ms">NEW YORK</text><text x="559.7" y="438.3" text-anchor="start" class="ms">MASSACHUSETTS</text><text x="573.1" y="452.7" text-anchor="middle" class="ms">CT</text><text x="511.0" y="464.9" text-anchor="middle" class="ms">PENNSYLVANIA</text><text x="549.0" y="482.7" text-anchor="middle" class="ms">NJ</text><text x="520.0" y="489.5" text-anchor="middle" class="ms">MARYLAND</text><text x="297.3" y="388.6" text-anchor="start" class="mc">Minneapolis</text><circle cx="316.8" cy="392.4" r="1.300" fill="#fff" stroke="#555" stroke-width=".7"/><text x="373.9" y="441.9" text-anchor="start" class="mc">Chicago</text><circle cx="387.3" cy="445.2" r="1.300" fill="#fff" stroke="#555" stroke-width=".7"/><text x="433.7" y="434.3" text-anchor="start" class="mc">Detroit</text><circle cx="444.4" cy="437.6" r="1.300" fill="#fff" stroke="#555" stroke-width=".7"/><text x="462.8" y="411.4" text-anchor="start" class="mc">Toronto</text><circle cx="490.2" cy="415.2" r="1.300" fill="#fff" stroke="#555" stroke-width=".7"/><text x="525.0" y="391.9" text-anchor="start" class="mc">Ottawa</text><circle cx="535.8" cy="383.6" r="1.300" fill="#fff" stroke="#555" stroke-width=".7"/><text x="549.0" y="379.2" text-anchor="start" class="mc">Montréal</text><circle cx="563.0" cy="383.0" r="1.300" fill="#fff" stroke="#555" stroke-width=".7"/><text x="541.9" y="461.4" text-anchor="start" class="mc">New York</text><circle cx="557.1" cy="465.2" r="1.300" fill="#fff" stroke="#555" stroke-width=".7"/><text x="523.7" y="473.6" text-anchor="start" class="mc">Philadelphia</text><circle cx="542.7" cy="477.4" r="1.300" fill="#fff" stroke="#555" stroke-width=".7"/><circle cx="535.800" cy="383.600" r="1.500" fill="#222"/><circle cx="405.800" cy="479.900" r="1.300" fill="#fff" stroke="#555" stroke-width=".7"/><circle cx="330.300" cy="479.900" r="1.300" fill="#fff" stroke="#555" stroke-width=".7"/><text x="171.800" y="483.700" class="mu">United States</text><g><circle cx="435.4" cy="436.7" r="1.5" fill="#7df01e"/><circle cx="437" cy="450.7" r="2.4" fill="#7df01e"/><circle cx="428" cy="455.3" r="2" fill="#7df01e"/><circle cx="465.4" cy="463.6" r="2.4" fill="#7df01e"/><circle cx="479" cy="468.9" r="2.2" fill="#7df01e"/><circle cx="441" cy="462.7" r="2" fill="#7df01e"/><circle cx="454.6" cy="463.3" r="2" fill="#7df01e"/><circle cx="450.8" cy="464.5" r="2" fill="#7df01e"/><circle cx="427.4" cy="479.4" r="2" fill="#7df01e"/><circle cx="431" cy="480" r="2" fill="#7df01e"/><circle cx="303.1" cy="380.3" r="1.9" fill="#7df01e"/><circle cx="462" cy="476.3" r="2.2" fill="#7df01e"/><circle cx="458.5" cy="472.5" r="2" fill="#7df01e"/><circle cx="436" cy="484" r="2.5" fill="#7df01e"/><circle cx="455" cy="483" r="2.5" fill="#7df01e"/><circle cx="432.5" cy="470" r="1.6" fill="#7df01e"/><circle cx="430" cy="475.5" r="1.8" fill="#7df01e"/><circle cx="463.5" cy="470.5" r="1.7" fill="#7df01e"/><circle cx="466" cy="479" r="1.6" fill="#7df01e"/><circle cx="448" cy="462.5" r="1.5" fill="#7df01e"/><circle cx="460" cy="466.5" r="1.5" fill="#7df01e"/><circle cx="470" cy="474" r="1.4" fill="#7df01e"/><circle cx="425" cy="471" r="1.3" fill="#7df01e"/><circle cx="444.9" cy="477.4" r="5.3" fill="#7df01e"/><circle cx="452.5" cy="477.3" r="4.9" fill="#7df01e"/><circle cx="452.6" cy="476.8" r="4.4" fill="#7df01e"/><circle cx="444.3" cy="475.7" r="4.4" fill="#7df01e"/><circle cx="439.1" cy="477.9" r="4.5" fill="#7df01e"/><circle cx="447.7" cy="480.5" r="5.8" fill="#7df01e"/><circle cx="441.4" cy="472.9" r="5.9" fill="#7df01e"/><circle cx="454.7" cy="476.9" r="4.8" fill="#7df01e"/><circle cx="448.4" cy="476.9" r="4.8" fill="#7df01e"/><circle cx="448.1" cy="472.3" r="5.2" fill="#7df01e"/><circle cx="442.9" cy="471.7" r="5.2" fill="#7df01e"/><circle cx="448.6" cy="475.7" r="4.6" fill="#7df01e"/><circle cx="444.0" cy="470.9" r="4.8" fill="#7df01e"/><circle cx="441.2" cy="472.6" r="4.8" fill="#7df01e"/><circle cx="448.6" cy="469.4" r="4.7" fill="#7df01e"/><circle cx="440.5" cy="472.7" r="5.7" fill="#7df01e"/><circle cx="445.9" cy="471.3" r="5.9" fill="#7df01e"/><circle cx="450.9" cy="478.1" r="5.5" fill="#7df01e"/><circle cx="450.2" cy="479.0" r="4.4" fill="#7df01e"/><circle cx="442.5" cy="469.7" r="5.2" fill="#7df01e"/><circle cx="450.2" cy="472.2" r="5.4" fill="#7df01e"/><circle cx="440.7" cy="472.0" r="5.0" fill="#7df01e"/><circle cx="451.3" cy="469.3" r="5.1" fill="#7df01e"/><circle cx="445.3" cy="473.5" r="5.4" fill="#7df01e"/><circle cx="441.0" cy="469.4" r="5.6" fill="#7df01e"/><circle cx="445.3" cy="479.2" r="5.4" fill="#7df01e"/><circle cx="452.7" cy="475.7" r="4.6" fill="#7df01e"/><circle cx="448.2" cy="476.1" r="5.5" fill="#7df01e"/><circle cx="449.6" cy="477.5" r="4.9" fill="#7df01e"/><circle cx="448.3" cy="473.6" r="5.0" fill="#7df01e"/><circle cx="438.3" cy="473.0" r="5.6" fill="#7df01e"/><circle cx="449.7" cy="472.2" r="5.0" fill="#7df01e"/><circle cx="441.0" cy="480.1" r="5.8" fill="#7df01e"/><circle cx="448.8" cy="477.4" r="4.7" fill="#7df01e"/><circle cx="447.2" cy="479.8" r="5.2" fill="#7df01e"/><circle cx="446.5" cy="475.4" r="5.0" fill="#7df01e"/><circle cx="441.8" cy="478.9" r="5.8" fill="#7df01e"/><circle cx="444.1" cy="470.3" r="5.3" fill="#7df01e"/><circle cx="445.5" cy="473.5" r="5.7" fill="#7df01e"/><circle cx="448.1" cy="468.6" r="5.6" fill="#7df01e"/><circle cx="442.0" cy="477.8" r="4.5" fill="#7df01e"/><circle cx="445.0" cy="473.7" r="4.4" fill="#7df01e"/><circle cx="447.4" cy="477.7" r="4.8" fill="#7df01e"/><circle cx="446.6" cy="475.0" r="4.5" fill="#7df01e"/><circle cx="451.0" cy="477.5" r="4.3" fill="#7df01e"/><circle cx="451.6" cy="471.1" r="4.5" fill="#7df01e"/><circle cx="444.9" cy="477.4" r="3.9" fill="#f5ea14"/><circle cx="452.5" cy="477.3" r="3.5" fill="#f5ea14"/><circle cx="452.6" cy="476.8" r="3.0" fill="#f5ea14"/><circle cx="444.3" cy="475.7" r="3.0" fill="#f5ea14"/><circle cx="439.1" cy="477.9" r="3.1" fill="#f5ea14"/><circle cx="447.7" cy="480.5" r="4.4" fill="#f5ea14"/><circle cx="441.4" cy="472.9" r="4.5" fill="#f5ea14"/><circle cx="454.7" cy="476.9" r="3.4" fill="#f5ea14"/><circle cx="448.4" cy="476.9" r="3.4" fill="#f5ea14"/><circle cx="448.1" cy="472.3" r="3.8" fill="#f5ea14"/><circle cx="442.9" cy="471.7" r="3.8" fill="#f5ea14"/><circle cx="448.6" cy="475.7" r="3.2" fill="#f5ea14"/><circle cx="444.0" cy="470.9" r="3.4" fill="#f5ea14"/><circle cx="441.2" cy="472.6" r="3.4" fill="#f5ea14"/><circle cx="448.6" cy="469.4" r="3.3" fill="#f5ea14"/><circle cx="440.5" cy="472.7" r="4.3" fill="#f5ea14"/><circle cx="445.9" cy="471.3" r="4.5" fill="#f5ea14"/><circle cx="450.9" cy="478.1" r="4.1" fill="#f5ea14"/><circle cx="450.2" cy="479.0" r="3.0" fill="#f5ea14"/><circle cx="442.5" cy="469.7" r="3.8" fill="#f5ea14"/><circle cx="450.2" cy="472.2" r="4.0" fill="#f5ea14"/><circle cx="440.7" cy="472.0" r="3.6" fill="#f5ea14"/><circle cx="451.3" cy="469.3" r="3.7" fill="#f5ea14"/><circle cx="445.3" cy="473.5" r="4.0" fill="#f5ea14"/><circle cx="441.0" cy="469.4" r="4.2" fill="#f5ea14"/><circle cx="445.3" cy="479.2" r="4.0" fill="#f5ea14"/><circle cx="452.7" cy="475.7" r="3.2" fill="#f5ea14"/><circle cx="448.2" cy="476.1" r="4.1" fill="#f5ea14"/><circle cx="449.6" cy="477.5" r="3.5" fill="#f5ea14"/><circle cx="448.3" cy="473.6" r="3.6" fill="#f5ea14"/><circle cx="438.3" cy="473.0" r="4.2" fill="#f5ea14"/><circle cx="449.7" cy="472.2" r="3.6" fill="#f5ea14"/><circle cx="441.0" cy="480.1" r="4.4" fill="#f5ea14"/><circle cx="448.8" cy="477.4" r="3.3" fill="#f5ea14"/><circle cx="447.2" cy="479.8" r="3.8" fill="#f5ea14"/><circle cx="446.5" cy="475.4" r="3.6" fill="#f5ea14"/><circle cx="441.8" cy="478.9" r="4.4" fill="#f5ea14"/><circle cx="444.1" cy="470.3" r="3.9" fill="#f5ea14"/><circle cx="445.5" cy="473.5" r="4.3" fill="#f5ea14"/><circle cx="448.1" cy="468.6" r="4.2" fill="#f5ea14"/><circle cx="442.0" cy="477.8" r="3.1" fill="#f5ea14"/><circle cx="445.0" cy="473.7" r="3.0" fill="#f5ea14"/><circle cx="447.4" cy="477.7" r="3.4" fill="#f5ea14"/><circle cx="446.6" cy="475.0" r="3.1" fill="#f5ea14"/><circle cx="451.0" cy="477.5" r="2.9" fill="#f5ea14"/><circle cx="451.6" cy="471.1" r="3.1" fill="#f5ea14"/><circle cx="444.9" cy="477.4" r="3.2" fill="#ff1f14"/><circle cx="452.5" cy="477.3" r="2.8" fill="#ff1f14"/><circle cx="452.6" cy="476.8" r="2.3" fill="#ff1f14"/><circle cx="444.3" cy="475.7" r="2.3" fill="#ff1f14"/><circle cx="439.1" cy="477.9" r="2.4" fill="#ff1f14"/><circle cx="447.7" cy="480.5" r="3.7" fill="#ff1f14"/><circle cx="441.4" cy="472.9" r="3.8" fill="#ff1f14"/><circle cx="454.7" cy="476.9" r="2.7" fill="#ff1f14"/><circle cx="448.4" cy="476.9" r="2.7" fill="#ff1f14"/><circle cx="448.1" cy="472.3" r="3.1" fill="#ff1f14"/><circle cx="442.9" cy="471.7" r="3.1" fill="#ff1f14"/><circle cx="448.6" cy="475.7" r="2.5" fill="#ff1f14"/><circle cx="444.0" cy="470.9" r="2.7" fill="#ff1f14"/><circle cx="441.2" cy="472.6" r="2.7" fill="#ff1f14"/><circle cx="448.6" cy="469.4" r="2.6" fill="#ff1f14"/><circle cx="440.5" cy="472.7" r="3.6" fill="#ff1f14"/><circle cx="445.9" cy="471.3" r="3.8" fill="#ff1f14"/><circle cx="450.9" cy="478.1" r="3.4" fill="#ff1f14"/><circle cx="450.2" cy="479.0" r="2.3" fill="#ff1f14"/><circle cx="442.5" cy="469.7" r="3.1" fill="#ff1f14"/><circle cx="450.2" cy="472.2" r="3.3" fill="#ff1f14"/><circle cx="440.7" cy="472.0" r="2.9" fill="#ff1f14"/><circle cx="451.3" cy="469.3" r="3.0" fill="#ff1f14"/><circle cx="445.3" cy="473.5" r="3.3" fill="#ff1f14"/><circle cx="441.0" cy="469.4" r="3.5" fill="#ff1f14"/><circle cx="445.3" cy="479.2" r="3.3" fill="#ff1f14"/><circle cx="452.7" cy="475.7" r="2.5" fill="#ff1f14"/><circle cx="448.2" cy="476.1" r="3.4" fill="#ff1f14"/><circle cx="449.6" cy="477.5" r="2.8" fill="#ff1f14"/><circle cx="448.3" cy="473.6" r="2.9" fill="#ff1f14"/><circle cx="438.3" cy="473.0" r="3.5" fill="#ff1f14"/><circle cx="449.7" cy="472.2" r="2.9" fill="#ff1f14"/><circle cx="441.0" cy="480.1" r="3.7" fill="#ff1f14"/><circle cx="448.8" cy="477.4" r="2.6" fill="#ff1f14"/><circle cx="447.2" cy="479.8" r="3.1" fill="#ff1f14"/><circle cx="446.5" cy="475.4" r="2.9" fill="#ff1f14"/><circle cx="441.8" cy="478.9" r="3.7" fill="#ff1f14"/><circle cx="444.1" cy="470.3" r="3.2" fill="#ff1f14"/><circle cx="445.5" cy="473.5" r="3.6" fill="#ff1f14"/><circle cx="448.1" cy="468.6" r="3.5" fill="#ff1f14"/><circle cx="442.0" cy="477.8" r="2.4" fill="#ff1f14"/><circle cx="445.0" cy="473.7" r="2.3" fill="#ff1f14"/><circle cx="447.4" cy="477.7" r="2.7" fill="#ff1f14"/><circle cx="446.6" cy="475.0" r="2.4" fill="#ff1f14"/><circle cx="451.0" cy="477.5" r="2.2" fill="#ff1f14"/><circle cx="451.6" cy="471.1" r="2.4" fill="#ff1f14"/><circle cx="437" cy="450.700" r="1.100" fill="#ff2a1a"/><circle cx="462" cy="476.300" r="1" fill="#ff2a1a"/><circle cx="465.400" cy="463.600" r="1.100" fill="#e6e628"/></g></g><g><rect x="175.100" y="372.100" width="91.800" height="21.600" rx="1" fill="#fff" style="filter:drop-shadow(0 .5px 1px rgba(0,0,0,.3))"/><path d="M213.100 372.100 V393.700" stroke="#e6e6e6" stroke-width=".5"/><text x="184.500" y="386.600" class="mb" fill="#000" style="font-weight:bold">Map</text><text x="223" y="386.600" class="mb" fill="#565656">Satellite</text><rect x="566.300" y="372.100" width="21.500" height="19.300" rx="1" fill="#fff" style="filter:drop-shadow(0 .5px 1px rgba(0,0,0,.3))"/><path d="M572.800 379.800 V376.800 H575.800 M578.800 376.800 H581.800 V379.800 M581.800 383.600 V386.600 H578.800 M575.800 386.600 H572.800 V383.600" fill="none" stroke="#555" stroke-width="1.300"/><rect x="566.800" y="469.800" width="21.500" height="20" rx="1" fill="#fff" style="filter:drop-shadow(0 .5px 1px rgba(0,0,0,.3))"/><circle cx="577.500" cy="475.500" r="2.300" fill="#f5a623"/><path d="M574 479.500 q3.500 -2 7 0 v6 h-7z" fill="#f5a623"/></g></svg>
<div class="t ttl" style="left:1231.6px;top:682.2px;">Job Name by Invoice Date Year</div>
<div class="t sub" style="left:1231.6px;top:701.9px;">Total Invoice Total</div>
<svg style="left:1601px;top:689px" width="18" height="4" viewBox="0 0 18 4"><circle cx="2" cy="2" r="1.7" fill="#bdbdbd"/><circle cx="9" cy="2" r="1.7" fill="#bdbdbd"/><circle cx="16" cy="2" r="1.7" fill="#bdbdbd"/></svg>
<div class="t hd" style="left:1236.0px;top:744.2px;">Group</div>
<div class="t hd" style="right:342.8px;top:744.2px;letter-spacing:.3px;word-spacing:1.5px">Total Invoice Total</div>
<svg style="left:1592.6px;top:750.5px" width="10" height="6" viewBox="0 0 10 6"><path d="M0 0 H10 L5 5.5 Z" fill="#9e9e9e"/></svg>
<div class="vl" style="left:1430px;top:732px;height:250px"></div>
<div class="vl" style="left:1613px;top:732px;height:38px"></div>
<div class="hl" style="left:1228px;top:770px;width:402px;background:#e6e6e6"></div>
<div class="t cell" style="left:1237px;top:780.5px;max-width:193px;overflow:hidden"><span style="letter-spacing:.27px">9001 - Dominion Retainage</span></div>
<div class="t cell" style="right:316.0px;top:780.5px;">-22,848.50</div>
<div class="hl" style="left:1228px;top:802.2px;width:387px"></div>
<div class="t cell" style="left:1237px;top:811.3px;max-width:193px;overflow:hidden">347 HAMPSTED VILLAGE</div>
<div class="t cell" style="right:316.0px;top:811.3px;">-19,862.46</div>
<div class="hl" style="left:1228px;top:833.1px;width:387px"></div>
<div class="t cell" style="left:1237px;top:842.2px;max-width:193px;overflow:hidden">7 GAHANNA GROVE</div>
<div class="t cell" style="right:316.0px;top:842.2px;">3,682.80</div>
<div class="hl" style="left:1228px;top:863.9px;width:387px"></div>
<div class="t cell" style="left:1237px;top:873.0px;max-width:193px;overflow:hidden">VILLAGES AT SYCAMORE CREEK</div>
<div class="t cell" style="right:316.0px;top:873.0px;">3,574.00</div>
<div class="hl" style="left:1228px;top:894.8px;width:387px"></div>
<div class="t cell" style="left:1237px;top:903.9px;max-width:193px;overflow:hidden">COVINGTON MEADOWS</div>
<div class="t cell" style="right:316.0px;top:903.9px;">5,301.00</div>
<div class="hl" style="left:1228px;top:925.6px;width:387px"></div>
<div class="t cell" style="left:1237px;top:934.8px;max-width:193px;overflow:hidden">EDGEWATER</div>
<div class="t cell" style="right:316.0px;top:934.8px;">7,125.00</div>
<div class="hl" style="left:1228px;top:956.5px;width:387px"></div>
<div class="t cell" style="left:1237px;top:965.6px;max-width:193px;overflow:hidden">LANTERN CHASE</div>
<div class="t cell" style="right:316.0px;top:965.6px;">6,313.00</div>
<div class="hl" style="left:1228px;top:987.4px;width:387px"></div>
<div class="abs" style="left:1615.5px;top:772px;width:15px;height:200px;background:#f1f1f1"></div>
<div class="abs" style="left:1615.5px;top:789.5px;width:15px;height:17.5px;background:#c1c1c1"></div>
<svg style="left:1619.5px;top:779px" width="7" height="4" viewBox="0 0 7 4"><path d="M0 4 H7 L3.5 0 Z" fill="#a3a3a3"/></svg>
<div class="abs" style="left:0;top:123.5px;width:1920px;height:4px;background:linear-gradient(rgba(0,0,0,.16),rgba(0,0,0,0))"></div>
<div class="abs" style="left:1890px;top:123.5px;width:14px;height:847px;background:#f0f0f0"></div><div class="abs" id="sb" style="left:1903.5px;top:123.5px;width:17px;height:847px;background:#f1f1f1"></div>
<div class="abs" style="left:1905px;top:158.5px;width:13px;height:396px;background:#c1c1c1"></div>
<svg style="left:1907px;top:130px" width="9" height="5" viewBox="0 0 9 5"><path d="M0 5 H9 L4.5 0 Z" fill="#505050"/></svg>
<svg style="left:1907px;top:955px" width="9" height="5" viewBox="0 0 9 5"><path d="M0 0 H9 L4.5 5 Z" fill="#505050"/></svg>
<div class="abs" style="left:0;top:968px;width:1920px;height:2px;background:#3a3a3a"></div><div class="abs" style="left:194px;top:968px;width:48px;height:2px;background:#e08a3c"></div>
</div></body></html>
